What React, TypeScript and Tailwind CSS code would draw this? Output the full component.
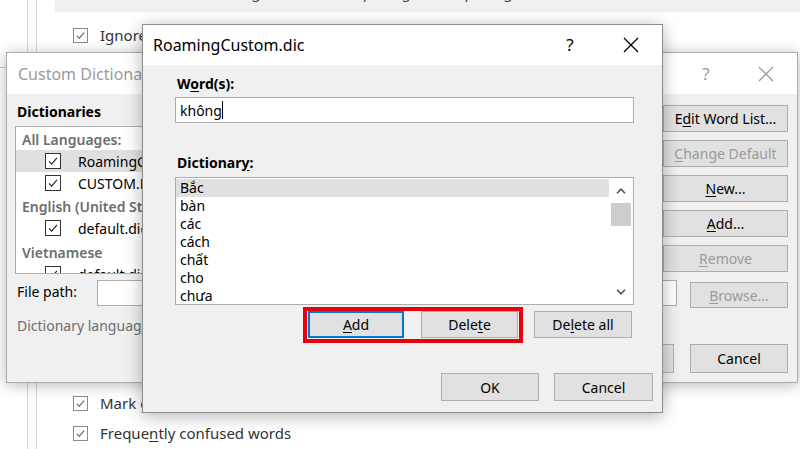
import React from "react";

function CheckMark({ className }: { className?: string }) {
  return (
    <svg viewBox="0 0 16 16" className={className} fill="none">
      <polyline points="3.5,8.5 6.5,11.5 12.5,4.5" stroke="currentColor" strokeWidth="1.3" />
    </svg>
  );
}

function XIcon({ className }: { className?: string }) {
  return (
    <svg viewBox="0 0 16 16" className={className} fill="none">
      <path d="M1 1 L15 15 M15 1 L1 15" stroke="currentColor" strokeWidth="1.3" />
    </svg>
  );
}

function Chevron({ up }: { up?: boolean }) {
  return (
    <svg viewBox="0 0 10 6" className="w-[10px] h-[6px]" fill="none">
      <polyline
        points={up ? "1,5.2 5,1.2 9,5.2" : "1,0.8 5,4.8 9,0.8"}
        stroke="#505050"
        strokeWidth="1.6"
      />
    </svg>
  );
}

function Btn({
  children,
  className = "",
  disabled = false,
}: {
  children: React.ReactNode;
  className?: string;
  disabled?: boolean;
}) {
  return (
    <div
      className={`flex items-center justify-center border border-[#adadad] bg-[#e1e1e1] text-[14px] ${
        disabled ? "text-[#9a9a9a]" : "text-black"
      } ${className}`}
    >
      {children}
    </div>
  );
}

function ListCheck() {
  return (
    <div className="w-[16px] h-[16px] border border-[#333] bg-white flex items-center justify-center text-[#222]">
      <CheckMark className="w-[14px] h-[14px]" />
    </div>
  );
}

function BgCheck() {
  return (
    <div className="w-[15px] h-[15px] border border-[#8a8a8a] bg-white flex items-center justify-center text-[#555] shrink-0">
      <CheckMark className="w-[13px] h-[13px]" />
    </div>
  );
}

export default function App() {
  const words = ["Bắc", "bàn", "các", "cách", "chất", "cho", "chưa"];
  return (
    <div className="relative w-[800px] h-[449px] overflow-hidden bg-white font-['Noto_Sans',sans-serif]">
      {/* Background: Word options page */}
      <div className="flex h-full">
        <div className="relative w-[28px] border-r border-[#d4d4d4] shrink-0">
          <div className="mt-[67px] w-[6px] border-t border-[#c8c8c8]" />
          <div className="mt-[50px] -ml-[10px] text-[14px] text-[#444] leading-[20px]">a</div>
        </div>
        <div className="w-[9px] border-r border-[#d4d4d4] shrink-0" />
        <div className="flex-1 flex flex-col">
          <div className="ml-[18px] h-[12px] bg-[#f0f0f0] overflow-hidden">
            <div className="-mt-[18px] pl-[150px] text-[15px] leading-[20px] text-[#444] whitespace-nowrap">
              Check grammar with spelling &nbsp;&nbsp;&nbsp;&nbsp;&nbsp;&nbsp;&nbsp;&nbsp;&nbsp;&nbsp; spelling
            </div>
          </div>
          <div className="mt-[13px] ml-[36px] flex items-center gap-[12px] text-[15px] leading-[20px] text-[#333]">
            <BgCheck />
            <span>Ignore words in UPPERCASE</span>
          </div>
          <div className="mt-[348px] ml-[36px] flex items-center gap-[12px] text-[15px] leading-[20px] text-[#333]">
            <BgCheck />
            <span>Mark grammar errors as you type</span>
          </div>
          <div className="mt-[10px] ml-[36px] flex items-center gap-[12px] text-[15px] leading-[20px] text-[#333]">
            <BgCheck />
            <span>
              Freque<u className="underline-offset-2">n</u>tly confused words
            </span>
          </div>
        </div>
      </div>

      {/* Custom Dictionaries dialog */}
      <div className="absolute left-[6px] top-[52px] w-[792px] h-[331px] border border-[#aaaaaa] bg-[#f0f0f0] shadow-[0_2px_14px_rgba(0,0,0,0.28)] flex flex-col">
        <div className="h-[41px] bg-white flex items-center pl-[11px] pr-[16px] shrink-0">
          <div className="flex-1 text-[16px] text-[#9a9a9a]">Custom Dictionaries</div>
          <div className="w-[30px] flex justify-center text-[17px] text-[#9a9a9a]">?</div>
          <div className="w-[30px] ml-[30px] flex justify-center text-[#9a9a9a]">
            <XIcon className="w-[16px] h-[16px]" />
          </div>
        </div>
        <div className="flex-1 flex flex-col pl-[8px] pr-[9px] pt-[8px]">
          <div className="flex gap-[13px]">
            <div className="flex-1 flex flex-col">
              <div className="ml-[2px] h-[20px] leading-[20px] text-[14px] font-bold text-black">Dictionaries</div>
              <div className="mt-[4px] h-[148px] border border-[#adadad] bg-white overflow-hidden pt-[1px] text-[14px]">
                <div className="h-[22px] flex items-center pl-[6px] font-semibold text-[#6d6d6d]">All Languages:</div>
                <div className="h-[22px] flex items-center pl-[29px] gap-[17px] bg-[#e0e0e0] text-black">
                  <ListCheck />
                  <span>RoamingCustom.dic (Default)</span>
                </div>
                <div className="h-[22px] flex items-center pl-[29px] gap-[17px] text-black">
                  <ListCheck />
                  <span>CUSTOM.DIC</span>
                </div>
                <div className="h-[23px] flex items-end pl-[6px] font-semibold text-[#6d6d6d]">English (United States):</div>
                <div className="h-[22px] flex items-center pl-[29px] gap-[17px] text-black">
                  <ListCheck />
                  <span>default.dic</span>
                </div>
                <div className="h-[24px] flex items-end pl-[6px] font-semibold text-[#6d6d6d]">Vietnamese</div>
                <div className="h-[22px] flex items-center pl-[29px] gap-[17px] text-black">
                  <ListCheck />
                  <span>default.dic</span>
                </div>
              </div>
            </div>
            <div className="w-[125px] mt-[3px] flex flex-col gap-[8px]">
              <Btn className="h-[27px]">
                E<u className="underline-offset-2">d</u>it Word List...
              </Btn>
              <Btn className="h-[27px]" disabled>
                <u className="underline-offset-2">C</u>hange Default
              </Btn>
              <Btn className="h-[27px]">
                <u className="underline-offset-2">N</u>ew...
              </Btn>
              <Btn className="h-[27px]">
                <u className="underline-offset-2">A</u>dd...
              </Btn>
              <Btn className="h-[27px]" disabled>
                <u className="underline-offset-2">R</u>emove
              </Btn>
            </div>
          </div>
          <div className="mt-[6px] flex items-start">
            <div className="w-[80px] ml-[2px] h-[24px] leading-[24px] text-[14px] text-black">File path:</div>
            <div className="flex-1 h-[26px] border border-[#adadad] bg-white" />
            <Btn className="ml-[13px] w-[98px] h-[26px] mt-[2px]" disabled>
              <u className="underline-offset-2">B</u>rowse...
            </Btn>
          </div>
          <div className="mt-[8px] ml-[2px] h-[20px] leading-[20px] text-[14px] text-[#6d6d6d]">
            Dictionary langua<u className="underline-offset-2">g</u>e:
          </div>
          <div className="mt-[8px] flex justify-end gap-[16px]">
            <Btn className="w-[98px] h-[29px]">OK</Btn>
            <Btn className="w-[98px] h-[29px]">Cancel</Btn>
          </div>
        </div>
      </div>

      {/* RoamingCustom.dic dialog */}
      <div className="absolute left-[142px] top-[24px] w-[521px] h-[389px] border border-[#8c8c8c] bg-[#f0f0f0] shadow-[0_3px_16px_rgba(0,0,0,0.3)] flex flex-col">
        <div className="h-[40px] bg-white flex items-center pl-[10px] pr-[16px] shrink-0">
          <div className="flex-1 text-[16px] text-black">RoamingCustom.dic</div>
          <div className="w-[30px] flex justify-center text-[17px] text-black">?</div>
          <div className="w-[30px] ml-[31px] flex justify-center text-black">
            <XIcon className="w-[16px] h-[16px]" />
          </div>
        </div>
        <div className="flex flex-col pl-[32px] pr-[28px] pt-[9px]">
          <div className="ml-[2px] h-[20px] leading-[20px] text-[14px] font-bold text-black">
            W<u className="underline-offset-2">o</u>rd(s):
          </div>
          <div className="mt-[3px] h-[26px] border border-[#adadad] bg-white flex items-center pl-[4px] text-[14px] text-black">
            <span>không</span>
            <span className="w-[1px] h-[18px] bg-black" />
          </div>
          <div className="mt-[30px] ml-[2px] h-[20px] leading-[20px] text-[14px] font-bold text-black">
            Dictionar<u className="underline-offset-2">y</u>:
          </div>
          <div className="mt-[4px] h-[128px] border border-[#adadad] bg-white flex">
            <div className="flex-1 pt-[1px] text-[14px] text-black">
              {words.map((w, i) => (
                <div
                  key={w}
                  className={`h-[18px] leading-[18px] pl-[4px] ${i === 0 ? "bg-[#e0e0e0]" : ""}`}
                >
                  {w}
                </div>
              ))}
            </div>
            <div className="w-[24px] flex flex-col">
              <div className="h-[25px] flex items-center justify-center">
                <Chevron up />
              </div>
              <div className="h-[23px] mx-[2px] bg-[#cdcdcd]" />
              <div className="flex-1" />
              <div className="h-[24px] flex items-center justify-center">
                <Chevron />
              </div>
            </div>
          </div>
          <div className="mt-[6px] flex justify-end pr-[2px] gap-[16px]">
            <div className="relative flex gap-[17px]">
              <div className="w-[96px] h-[27px] flex items-center justify-center border-2 border-[#0078d7] bg-[#e1e1e1] text-[14px] text-black">
                <u className="underline-offset-2">A</u>dd
              </div>
              <Btn className="w-[97px] h-[27px]">
                Dele<u className="underline-offset-2">t</u>e
              </Btn>
              <div className="absolute -left-[5px] -top-[4px] -right-[5px] -bottom-[5px] border-4 border-[#e8000e]" />
            </div>
            <Btn className="w-[98px] h-[27px]">
              De<u className="underline-offset-2">l</u>ete all
            </Btn>
          </div>
        </div>
        <div className="mt-[35px] flex justify-end pr-[9px] gap-[15px]">
          <Btn className="w-[98px] h-[28px]">OK</Btn>
          <Btn className="w-[99px] h-[28px]">Cancel</Btn>
        </div>
      </div>
    </div>
  );
}
